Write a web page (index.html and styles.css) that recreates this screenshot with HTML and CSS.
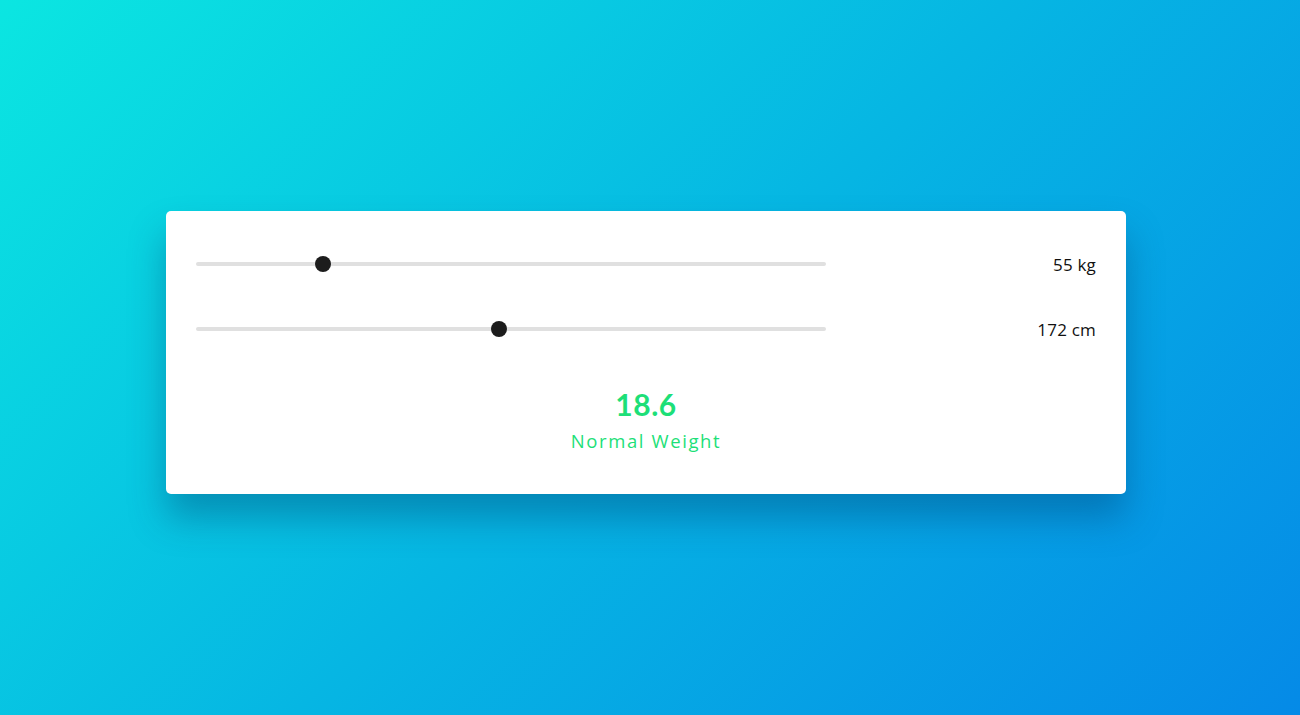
FILE: index.html
```html
<!DOCTYPE html>
<html lang="en">
<head>
<meta charset="utf-8">
<title>BMI Calculator</title>
<link rel="stylesheet" href="styles.css">
</head>
<body>
<main class="page">
  <section class="card">
    <div class="row">
      <input class="slider" type="range" min="20" max="200" value="55">
      <span class="value">55 kg</span>
    </div>
    <div class="row">
      <input class="slider" type="range" min="100" max="250" value="172">
      <span class="value">172 cm</span>
    </div>
    <div class="result">
      <div class="bmi">18.6</div>
      <div class="label">Normal Weight</div>
    </div>
  </section>
</main>
</body>
</html>
```
FILE: styles.css
```css
* { box-sizing: border-box; }
html, body { margin: 0; height: 100%; }
body {
  font-family: "Open Sans", "Lato", sans-serif;
  background: linear-gradient(135deg, #0be6e1 0%, #06b6e3 50%, #058ae7 100%);
}
.page {
  height: 715px;
  display: flex;
  align-items: center;
  justify-content: center;
  padding-right: 8px;
}
.card {
  width: 960px;
  height: 283px;
  margin-top: -10px;
  background: #fff;
  border-radius: 5px;
  padding: 30px;
  box-shadow: 0 24px 36px rgba(0, 60, 110, 0.38);
}
.row {
  display: flex;
  align-items: center;
  justify-content: space-between;
  height: 46px;
  margin-bottom: 19px;
}
.slider {
  -webkit-appearance: none;
  appearance: none;
  width: 630px;
  height: 4px;
  margin: 0;
  border-radius: 2px;
  background: #e0e0e0;
  outline: none;
}
.slider::-webkit-slider-thumb {
  -webkit-appearance: none;
  appearance: none;
  width: 16px;
  height: 16px;
  border-radius: 50%;
  background: #1c1c1c;
  border: none;
}
.value {
  font-size: 17px;
  letter-spacing: 0.2px;
  color: #111;
}
.result {
  margin-top: 34px;
  text-align: center;
  color: #1ddf78;
}
.bmi {
  font-family: "Lato", sans-serif;
  font-size: 30px;
  font-weight: 700;
  line-height: 36px;
  letter-spacing: 0.5px;
}
.label {
  margin-top: 5px;
  font-size: 18.5px;
  line-height: 28px;
  letter-spacing: 1.6px;
}
```
